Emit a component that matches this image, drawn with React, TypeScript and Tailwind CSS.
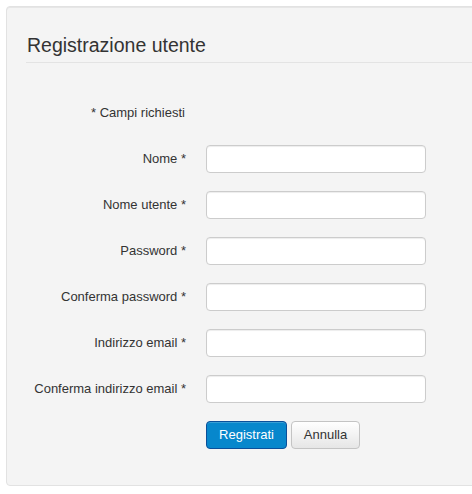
import React from "react";

const rows = [
  "Nome *",
  "Nome utente *",
  "Password *",
  "Conferma password *",
  "Indirizzo email *",
  "Conferma indirizzo email *",
];

export default function App() {
  return (
    <div
      className="w-[472px] h-[494px] bg-white overflow-hidden pt-[6px] pl-[6px]"
      style={{ fontFamily: '"Liberation Sans", Arial, sans-serif' }}
    >
      <div className="w-[480px] bg-[#f4f4f4] border border-[#e2e2e2] rounded-[4px] pl-[19px] pt-[26px] pb-[36px] shadow-[inset_0_1px_0_#e6e6e6]">
        <div className="border-b border-[#e3e3e3] pb-[5px]">
          <h2 className="pl-[1px] text-[19.5px] leading-[24px] text-[#333333] font-normal">
            Registrazione utente
          </h2>
        </div>
        <div className="mt-[41px] pl-[65px] text-[13px] leading-[18px] text-[#333333]">
          * Campi richiesti
        </div>
        <div className="mt-[23px] flex flex-col gap-[18px]">
          {rows.map((r) => (
            <div key={r} className="flex items-center h-[28px]">
              <div className="w-[160px] text-right text-[13px] leading-[18px] text-[#333333]">
                {r}
              </div>
              <input
                type="text"
                className="ml-[20px] w-[220px] h-[28px] bg-white border border-[#cccccc] rounded-[4px] shadow-[inset_0_1px_1px_rgba(0,0,0,0.075)] outline-none"
              />
            </div>
          ))}
          <div className="flex items-center h-[28px] pl-[180px] gap-[4px]">
            <button className="w-[81px] h-[28px] rounded-[4px] border border-[#0a4f9a] bg-[#0787cc] text-white text-[13px] leading-[18px] shadow-[inset_0_1px_0_rgba(255,255,255,0.2)]">
              Registrati
            </button>
            <button className="w-[69px] h-[28px] rounded-[4px] border border-[#c4c4c4] bg-gradient-to-b from-[#ffffff] to-[#e6e6e6] text-[#333333] text-[13px] leading-[18px]">
              Annulla
            </button>
          </div>
        </div>
      </div>
    </div>
  );
}
